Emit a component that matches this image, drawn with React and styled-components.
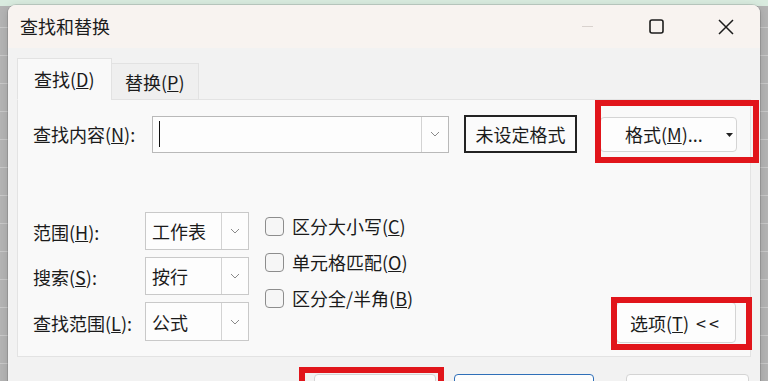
import styled, { createGlobalStyle } from "styled-components";

const GlobalStyle = createGlobalStyle`
  html, body {
    margin: 0;
    padding: 0;
    background: #b8b8b8;
  }
  body {
    font-family: "Noto Sans CJK SC", "Noto Sans", sans-serif;
    color: #1b1b1b;
  }
`;

// spreadsheet peeking out behind the dialog
const Backdrop = styled.div`
  width: 768px;
  height: 381px;
  overflow: hidden;
  display: flex;
  align-items: flex-start;
  background:
    linear-gradient(#d9ebdf, #d9ebdf) top left / 100% 6px no-repeat,
    repeating-linear-gradient(180deg, #b4b4b4 0 27px, #c9c9c9 27px 28px);
`;

const Dialog = styled.div`
  margin: 5px 0 0 8px;
  width: 752px;
  height: 420px;
  flex: none;
  display: flex;
  flex-direction: column;
  background: #f2f2f2;
  border-radius: 8px 8px 0 0;
  box-shadow: 0 0 0 1px rgba(0, 0, 0, 0.12), 0 2px 10px rgba(0, 0, 0, 0.15);
  overflow: hidden;
`;

const TitleBar = styled.div`
  height: 43px;
  display: flex;
  align-items: center;
  background: #f8f3f0;
  padding-left: 12px;
`;

const Title = styled.div`
  flex: 1;
  font-size: 18px;
  line-height: 1;
  margin-top: -2px;
`;

const WinButton = styled.div`
  width: 69px;
  height: 43px;
  display: flex;
  align-items: center;
  justify-content: center;
  color: ${(p) => (p.$faint ? "#d9d2ce" : "#1c1c1c")};
`;

const Body = styled.div`
  padding: 10px 0 0 9px;
  display: flex;
  flex-direction: column;
`;

const TabStrip = styled.div`
  display: flex;
  align-items: flex-end;
  height: 42px;
  position: relative;
  z-index: 1;
  margin-bottom: -1px;
`;

const Tab = styled.div`
  height: ${(p) => (p.$active ? "42px" : "37px")};
  box-sizing: border-box;
  padding: 0 ${(p) => (p.$active ? "16px" : "13px")};
  display: flex;
  align-items: center;
  font-size: 18px;
  background: ${(p) => (p.$active ? "#f9f9f9" : "#efefef")};
  border: 1px solid #e2e2e2;
  border-bottom: ${(p) => (p.$active ? "1px solid #f9f9f9" : "1px solid #e2e2e2")};
  margin-left: ${(p) => (p.$active ? "0" : "-1px")};
  min-width: ${(p) => (p.$active ? "95px" : "88px")};
  span {
    margin-top: ${(p) => (p.$active ? "-1px" : "1px")};
  }
`;

const Panel = styled.div`
  width: 734px;
  box-sizing: border-box;
  height: 258px;
  background: #f9f9f9;
  border: 1px solid #e3e3e3;
  padding: 15px 14px 0 15px;
  display: flex;
  flex-direction: column;
`;

const Row = styled.div`
  display: flex;
  align-items: center;
`;

const Label = styled.div`
  width: ${(p) => p.$w}px;
  flex: none;
  font-size: 18px;
  line-height: 1;
  margin-top: ${(p) => p.$dy || 0}px;
`;

const Combo = styled.div`
  width: ${(p) => p.$w}px;
  height: ${(p) => p.$h}px;
  box-sizing: border-box;
  flex: none;
  display: flex;
  background: #fdfdfd;
  border: 1px solid ${(p) => p.$border || "#c9c9c9"};
`;

const ComboText = styled.div`
  flex: 1;
  display: flex;
  align-items: center;
  padding-left: 6px;
  font-size: 18px;
`;

const Caret = styled.div`
  width: 1px;
  height: 26px;
  background: #111;
`;

const ComboArrow = styled.div`
  width: 26px;
  flex: none;
  display: flex;
  align-items: center;
  justify-content: center;
  border-left: 1px solid #d3d3d3;
  color: #8a8a8a;
`;

const PlainButton = styled.div`
  margin-left: 15px;
  width: 113px;
  height: 38px;
  box-sizing: border-box;
  flex: none;
  display: flex;
  align-items: center;
  justify-content: center;
  font-size: 18px;
  background: #fbfbfb;
  border: 2px solid #232323;
`;

const Marked = styled.div`
  position: relative;
  flex: none;
  margin-left: ${(p) => p.$ml || 0}px;
`;

// red annotation frame drawn over the screenshot
const RedFrame = styled.div`
  position: absolute;
  top: ${(p) => p.$t}px;
  left: ${(p) => p.$l}px;
  right: ${(p) => p.$r}px;
  bottom: ${(p) => p.$b}px;
  border: 6px solid #e1151b;
  pointer-events: none;
`;

const SoftButton = styled.div`
  width: ${(p) => p.$w}px;
  height: ${(p) => p.$h}px;
  box-sizing: border-box;
  display: flex;
  align-items: center;
  justify-content: ${(p) => (p.$start ? "flex-start" : "center")};
  padding-left: ${(p) => p.$pl || 0}px;
  font-size: 18px;
  background: #fdfdfd;
  border: 1px solid ${(p) => p.$border || "#d4d4d4"};
  border-radius: 4px;
`;

const Drop = styled.svg`
  margin-left: 23px;
  margin-top: 2px;
  color: #222;
`;

const Arrows = styled.span`
  margin-left: 7px;
  letter-spacing: 3px;
`;

const Lower = styled.div`
  margin-top: 59px;
  display: flex;
  align-items: flex-start;
`;

const SelectGrid = styled.div`
  display: grid;
  grid-template-columns: 112px 104px;
  row-gap: 7px;
  align-items: center;
`;

const Checks = styled.div`
  margin: -4px 0 0 16px;
  display: flex;
  flex-direction: column;
`;

const CheckRow = styled.div`
  height: 36px;
  display: flex;
  align-items: center;
  gap: 8px;
  font-size: 18px;
`;

const Box = styled.div`
  width: 19px;
  height: 19px;
  box-sizing: border-box;
  border: 1px solid #8d8d8d;
  border-radius: 4px;
  background: #f6f6f6;
`;

const Spacer = styled.div`
  flex: 1;
`;

const OptionsSlot = styled.div`
  align-self: flex-end;
  margin-bottom: -2px;
`;

const Footer = styled.div`
  display: flex;
  padding-top: 17px;
  padding-left: 297px;
`;

const Chevron = () => (
  <svg width="10" height="6" viewBox="0 0 10 6">
    <path d="M1 1l4 4 4-4" fill="none" stroke="currentColor" strokeWidth="1" />
  </svg>
);

const Key = ({ k }) => (
  <>
    (<u>{k}</u>)
  </>
);

export default function App() {
  return (
    <>
      <GlobalStyle />
      <Backdrop>
        <Dialog>
          <TitleBar>
            <Title>查找和替换</Title>
            <WinButton $faint>
              <svg width="11" height="2" viewBox="0 0 11 2">
                <rect width="11" height="1" fill="currentColor" />
              </svg>
            </WinButton>
            <WinButton>
              <svg width="15" height="15" viewBox="0 0 15 15">
                <rect x="1" y="1" width="13" height="13" rx="2" fill="none" stroke="currentColor" strokeWidth="1.6" />
              </svg>
            </WinButton>
            <WinButton>
              <svg width="16" height="16" viewBox="0 0 16 16">
                <path d="M1 1l14 14M15 1L1 15" stroke="currentColor" strokeWidth="1.5" />
              </svg>
            </WinButton>
          </TitleBar>

          <Body>
            <TabStrip>
              <Tab $active>
                <span>
                  查找<Key k="D" />
                </span>
              </Tab>
              <Tab>
                <span>
                  替换<Key k="P" />
                </span>
              </Tab>
            </TabStrip>

            <Panel>
              <Row>
                <Label $w={119}>
                  查找内容<Key k="N" />:
                </Label>
                <Combo $w={297} $h={37} $border="#b9b9b9">
                  <ComboText>
                    <Caret />
                  </ComboText>
                  <ComboArrow>
                    <Chevron />
                  </ComboArrow>
                </Combo>
                <PlainButton>未设定格式</PlainButton>
                <Marked $ml={23}>
                  <SoftButton $w={137} $h={35} $start $pl={24}>
                    <span>
                      格式<Key k="M" />...
                    </span>
                    <Drop width="7" height="4" viewBox="0 0 7 4">
                      <path d="M0 0h7L3.5 4z" fill="currentColor" />
                    </Drop>
                  </SoftButton>
                  <RedFrame $t={-17} $l={-5} $r={-22} $b={-11} />
                </Marked>
              </Row>

              <Lower>
                <SelectGrid>
                  <Label $w={112} $dy={2}>
                    范围<Key k="H" />:
                  </Label>
                  <Combo $w={104} $h={38}>
                    <ComboText>工作表</ComboText>
                    <ComboArrow>
                      <Chevron />
                    </ComboArrow>
                  </Combo>
                  <Label $w={112} $dy={2}>
                    搜索<Key k="S" />:
                  </Label>
                  <Combo $w={104} $h={38}>
                    <ComboText>按行</ComboText>
                    <ComboArrow>
                      <Chevron />
                    </ComboArrow>
                  </Combo>
                  <Label $w={112} $dy={2}>
                    查找范围<Key k="L" />:
                  </Label>
                  <Combo $w={104} $h={39}>
                    <ComboText>公式</ComboText>
                    <ComboArrow>
                      <Chevron />
                    </ComboArrow>
                  </Combo>
                </SelectGrid>

                <Checks>
                  <CheckRow>
                    <Box />
                    <span>
                      区分大小写<Key k="C" />
                    </span>
                  </CheckRow>
                  <CheckRow>
                    <Box />
                    <span>
                      单元格匹配<Key k="O" />
                    </span>
                  </CheckRow>
                  <CheckRow>
                    <Box />
                    <span>
                      区分全/半角<Key k="B" />
                    </span>
                  </CheckRow>
                </Checks>

                <Spacer />

                <OptionsSlot>
                  <Marked>
                    <SoftButton $w={120} $h={41}>
                      <span>
                        选项<Key k="T" />
                      </span>
                      <Arrows>&lt;&lt;</Arrows>
                    </SoftButton>
                    <RedFrame $t={-5} $l={-5} $r={-16} $b={-7} />
                  </Marked>
                </OptionsSlot>
              </Lower>
            </Panel>

            <Footer>
              <Marked>
                <SoftButton $w={122} $h={36} />
                <RedFrame $t={-7} $l={-15} $r={-8} $b={-20} />
              </Marked>
              <Marked $ml={18}>
                <SoftButton $w={140} $h={36} $border="#2f6fb8" />
              </Marked>
              <Marked $ml={32}>
                <SoftButton $w={123} $h={36} />
              </Marked>
            </Footer>
          </Body>
        </Dialog>
      </Backdrop>
    </>
  );
}
